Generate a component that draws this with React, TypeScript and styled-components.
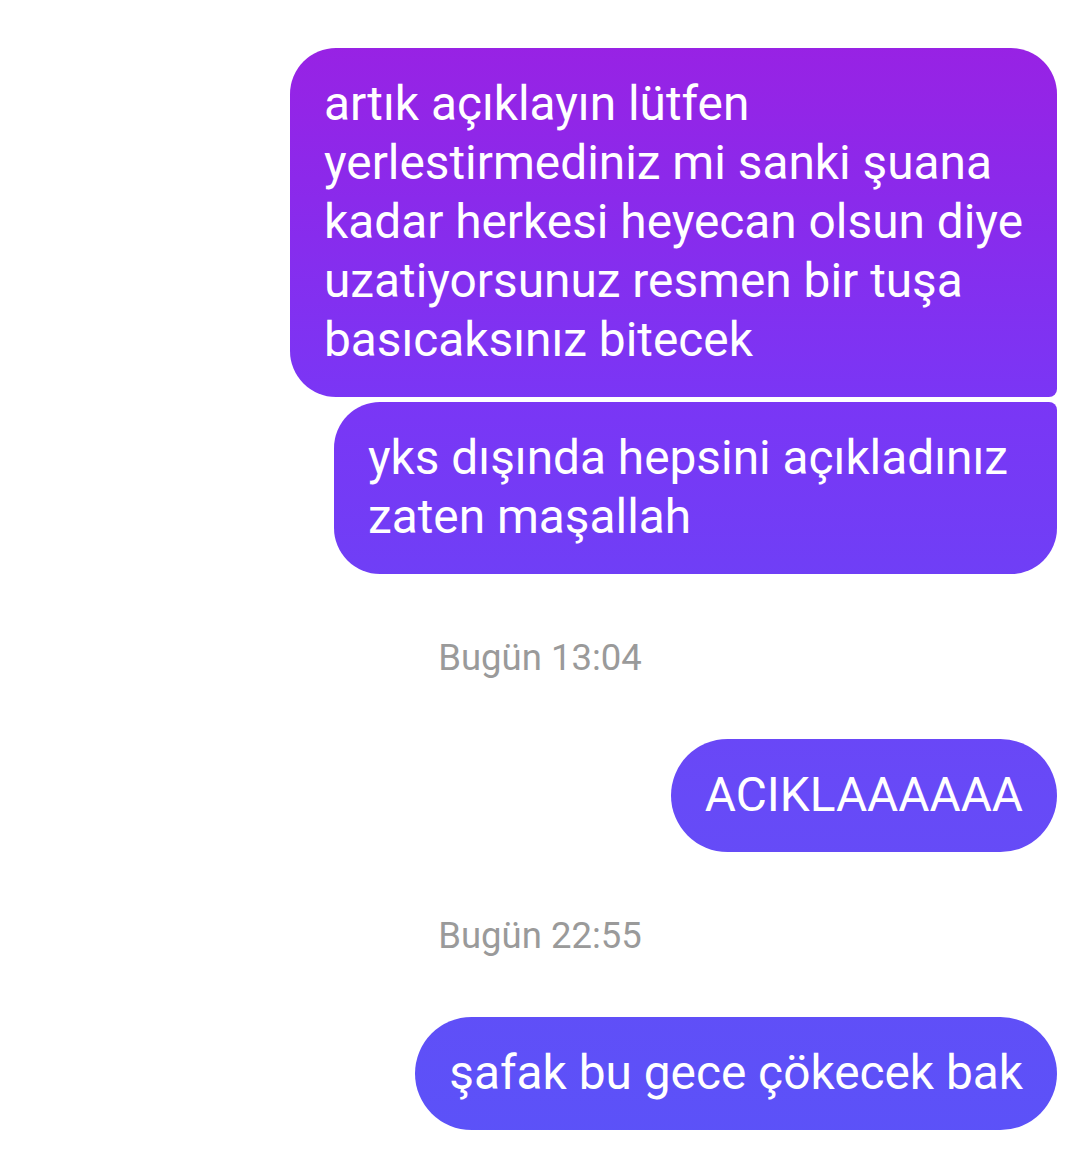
import React from "react";
import styled, { createGlobalStyle, css } from "styled-components";

const Global = createGlobalStyle`
  html, body { margin: 0; padding: 0; background: #ffffff; }
  body { font-family: Roboto, "Noto Sans", "Liberation Sans", sans-serif; -webkit-font-smoothing: antialiased; }
`;

const Thread = styled.div`
  width: 1080px;
  min-height: 1150px;
  box-sizing: border-box;
  padding: 48px 0 0 0;
  display: flex;
  flex-direction: column;
  background: #ffffff;
`;

const Group = styled.div`
  display: flex;
  flex-direction: column;
  align-items: flex-end;
  gap: 5px;
  padding-right: 23px;
`;

type Pos = "first" | "last" | "single";

const BIG = 46;
const SMALL = 8;

const Bubble = styled.div<{ $pos: Pos; $minWidth?: number }>`
  box-sizing: border-box;
  padding: 27px 34px;
  min-width: ${({ $minWidth }) => ($minWidth ? `${$minWidth}px` : "0")};
  color: #ffffff;
  font-size: 47.8px;
  line-height: 59px;
  white-space: nowrap;
  background: linear-gradient(
    180deg,
    #9c20e2 0px,
    #8a2aeb 200px,
    #7a36f5 400px,
    #6f3ff6 580px,
    #674af7 800px,
    #5b52f8 1150px
  );
  background-attachment: fixed;
  ${({ $pos }) =>
    $pos === "first"
      ? css`border-radius: ${BIG}px ${BIG}px ${SMALL}px ${BIG}px;`
      : $pos === "last"
      ? css`border-radius: ${BIG}px ${SMALL}px ${BIG}px ${BIG}px;`
      : css`border-radius: 57px;`}
`;

const Line = styled.span`
  display: block;
`;

const Stamp = styled.div`
  align-self: center;
  margin: 64px 0 61px;
  color: #9a9a9a;
  font-size: 36.5px;
  line-height: 40px;
`;

type Msg = { pos: Pos; lines: string[]; minWidth?: number };

const groups: { stamp?: string; msgs: Msg[] }[] = [
  {
    msgs: [
      {
        pos: "first",
        lines: [
          "artık açıklayın lütfen",
          "yerlestirmediniz mi sanki şuana",
          "kadar herkesi heyecan olsun diye",
          "uzatiyorsunuz resmen bir tuşa",
          "basıcaksınız bitecek",
        ],
      },
      {
        pos: "last",
        lines: ["yks dışında hepsini açıkladınız", "zaten maşallah"],
        minWidth: 723,
      },
    ],
  },
  { stamp: "Bugün 13:04", msgs: [{ pos: "single", lines: ["ACIKLAAAAAA"] }] },
  { stamp: "Bugün 22:55", msgs: [{ pos: "single", lines: ["şafak bu gece çökecek bak"] }] },
];

export default function App() {
  return (
    <>
      <Global />
      <Thread>
        {groups.map((g, i) => (
          <React.Fragment key={i}>
            {g.stamp && <Stamp>{g.stamp}</Stamp>}
            <Group>
              {g.msgs.map((m, j) => (
                <Bubble key={j} $pos={m.pos} $minWidth={m.minWidth}>
                  {m.lines.map((l, k) => (
                    <Line key={k}>{l}</Line>
                  ))}
                </Bubble>
              ))}
            </Group>
          </React.Fragment>
        ))}
      </Thread>
    </>
  );
}
